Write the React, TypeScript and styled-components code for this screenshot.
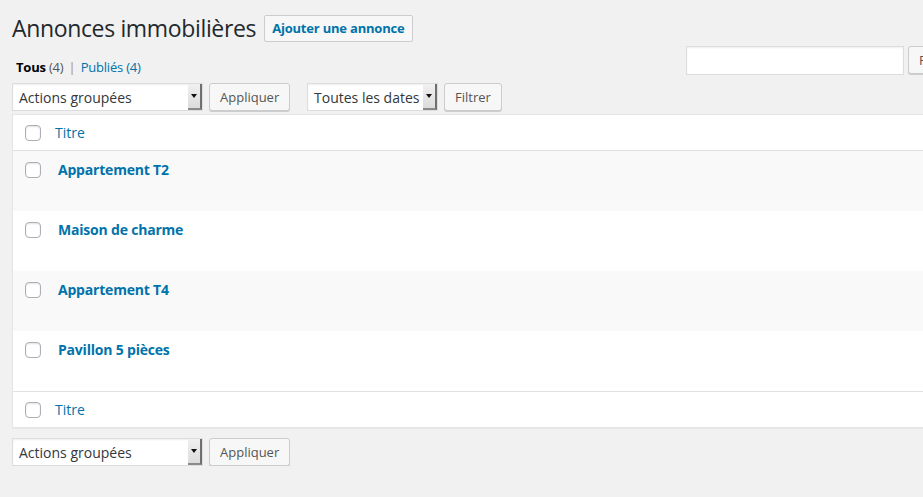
import React from "react";
import styled, { createGlobalStyle } from "styled-components";

const Global = createGlobalStyle`
  html, body { margin: 0; padding: 0; background: #f1f1f1; overflow: hidden; }
  body { font-family: "Open Sans", "Noto Sans", sans-serif; color: #444; font-size: 13px; }
  * { box-sizing: border-box; }
`;

const Page = styled.div`
  width: 999px;
  padding: 0 0 0 12px;
`;

const HeadingRow = styled.div`
  display: flex;
  align-items: center;
  gap: 8px;
  padding-top: 14px;
  height: 42px;
`;

const Title = styled.h1`
  margin: 0;
  font-size: 23px;
  font-weight: 400;
  color: #23282d;
  line-height: 28px;
  letter-spacing: -0.35px;
`;

const AddButton = styled.a`
  display: inline-flex;
  align-items: center;
  height: 27px;
  padding: 0 7px;
  border: 1px solid #ccc;
  border-radius: 2px;
  background: #f7f7f7;
  color: #0073aa;
  font-weight: 700;
  font-size: 13px;
  letter-spacing: -0.2px;
  text-decoration: none;
`;

const TopRow = styled.div`
  display: flex;
  justify-content: space-between;
  align-items: flex-start;
  margin-top: 4px;
  height: 29px;
`;

const Subsub = styled.ul`
  list-style: none;
  margin: 0;
  padding: 13px 0 0 4px;
  display: flex;
  align-items: center;
  font-size: 13px;
  line-height: 16px;
`;

const SubItem = styled.li<{ $current?: boolean }>`
  color: ${(p) => (p.$current ? "#000" : "#0073aa")};
  font-weight: ${(p) => (p.$current ? 700 : 400)};
  letter-spacing: -0.2px;
`;

const Count = styled.span<{ $link?: boolean }>`
  font-weight: 400;
  color: ${(p) => (p.$link ? "#0073aa" : "#555")};
`;

const Sep = styled.span`
  color: #b08a6a;
  margin: 0 5px 0 5px;
`;

const SearchBox = styled.div`
  display: flex;
  gap: 4px;
`;

const SearchInput = styled.div`
  width: 218px;
  height: 29px;
  background: #fff;
  border: 1px solid #ddd;
  box-shadow: inset 0 1px 2px rgba(0, 0, 0, 0.07);
`;

const Button = styled.button<{ $w?: number }>`
  height: 28px;
  ${(p) => (p.$w ? `width: ${p.$w}px;` : "")}
  padding: 0 10px;
  border: 1px solid #ccc;
  border-radius: 3px;
  background: #f7f7f7;
  box-shadow: 0 1px 0 #ccc;
  color: #555;
  font-family: inherit;
  font-size: 13px;
  line-height: 26px;
  white-space: nowrap;
`;

const TableNav = styled.div<{ $top?: boolean }>`
  display: flex;
  align-items: center;
  height: 28px;
  margin: ${(p) => (p.$top ? "8px 0 3px" : "10px 0 0")};
`;

const Group = styled.div`
  display: flex;
  align-items: center;
  gap: 6px;
  margin-right: 17px;
`;

const Select = styled.div<{ $w: number }>`
  position: relative;
  display: flex;
  align-items: center;
  width: ${(p) => p.$w}px;
  height: 28px;
  background: #fff;
  border: 1px solid #ddd;
  box-shadow: inset 0 1px 2px rgba(0, 0, 0, 0.07);
  padding-left: 6px;
  font-size: 14px;
  color: #32373c;
`;

const Arrow = styled.span`
  position: absolute;
  right: 0;
  top: 0;
  bottom: 0;
  width: 14px;
  background: linear-gradient(#f0f0f0, #dcdcdc);
  border-right: 2px solid #6f6f6f;
  border-bottom: 2px solid #8a8a8a;
  display: flex;
  align-items: center;
  justify-content: center;
  &::after {
    content: "";
    border-left: 3px solid transparent;
    border-right: 3px solid transparent;
    border-top: 4px solid #111;
  }
`;

const Table = styled.div`
  background: #fff;
  border: 1px solid #e5e5e5;
  box-shadow: 0 1px 1px rgba(0, 0, 0, 0.04);
`;

const HeadRow = styled.div<{ $foot?: boolean }>`
  display: flex;
  align-items: center;
  height: 36px;
  ${(p) => (p.$foot ? "border-top: 1px solid #e1e1e1;" : "border-bottom: 1px solid #e1e1e1;")}
`;

const Row = styled.div<{ $alt?: boolean }>`
  display: flex;
  align-items: flex-start;
  height: 60px;
  background: ${(p) => (p.$alt ? "#f9f9f9" : "#fff")};
  padding-top: 11px;
`;

const CheckCell = styled.div`
  width: 42px;
  display: flex;
  justify-content: flex-start;
  padding-left: 12px;
`;

const Check = styled.span`
  display: block;
  width: 16px;
  height: 16px;
  border: 1px solid #aab0b5;
  border-radius: 4px;
  background: #fff;
  box-shadow: inset 0 1px 2px rgba(0, 0, 0, 0.12);
`;

const ColTitle = styled.a`
  color: #0073aa;
  font-size: 14px;
  text-decoration: none;
  line-height: 16px;
`;

const RowTitle = styled.a`
  margin-left: 3px;
  margin-top: -1px;
  color: #0073aa;
  font-size: 14px;
  font-weight: 700;
  letter-spacing: -0.2px;
  text-decoration: none;
  line-height: 17px;
`;

const rows = ["Appartement T2", "Maison de charme", "Appartement T4", "Pavillon 5 pièces"];

function BulkNav({ top }: { top?: boolean }) {
  return (
    <TableNav $top={top}>
      <Group>
        <Select $w={191}>
          Actions groupées
          <Arrow />
        </Select>
        <Button $w={81}>Appliquer</Button>
      </Group>
      {top && (
        <Group>
          <Select $w={131}>
            Toutes les dates
            <Arrow />
          </Select>
          <Button $w={58}>Filtrer</Button>
        </Group>
      )}
    </TableNav>
  );
}

export default function App() {
  return (
    <Page>
      <Global />
      <HeadingRow>
        <Title>Annonces immobilières</Title>
        <AddButton href="#">Ajouter une annonce</AddButton>
      </HeadingRow>
      <TopRow>
        <Subsub>
          <SubItem $current>
            Tous <Count>(4)</Count>
          </SubItem>
          <Sep>|</Sep>
          <SubItem>
            Publiés <Count $link>(4)</Count>
          </SubItem>
        </Subsub>
        <SearchBox>
          <SearchInput />
          <Button>Rechercher</Button>
        </SearchBox>
      </TopRow>
      <BulkNav top />
      <Table>
        <HeadRow>
          <CheckCell>
            <Check />
          </CheckCell>
          <ColTitle href="#">Titre</ColTitle>
        </HeadRow>
        {rows.map((r, i) => (
          <Row key={r} $alt={i % 2 === 0}>
            <CheckCell>
              <Check />
            </CheckCell>
            <RowTitle href="#">{r}</RowTitle>
          </Row>
        ))}
        <HeadRow $foot>
          <CheckCell>
            <Check />
          </CheckCell>
          <ColTitle href="#">Titre</ColTitle>
        </HeadRow>
      </Table>
      <BulkNav />
    </Page>
  );
}
